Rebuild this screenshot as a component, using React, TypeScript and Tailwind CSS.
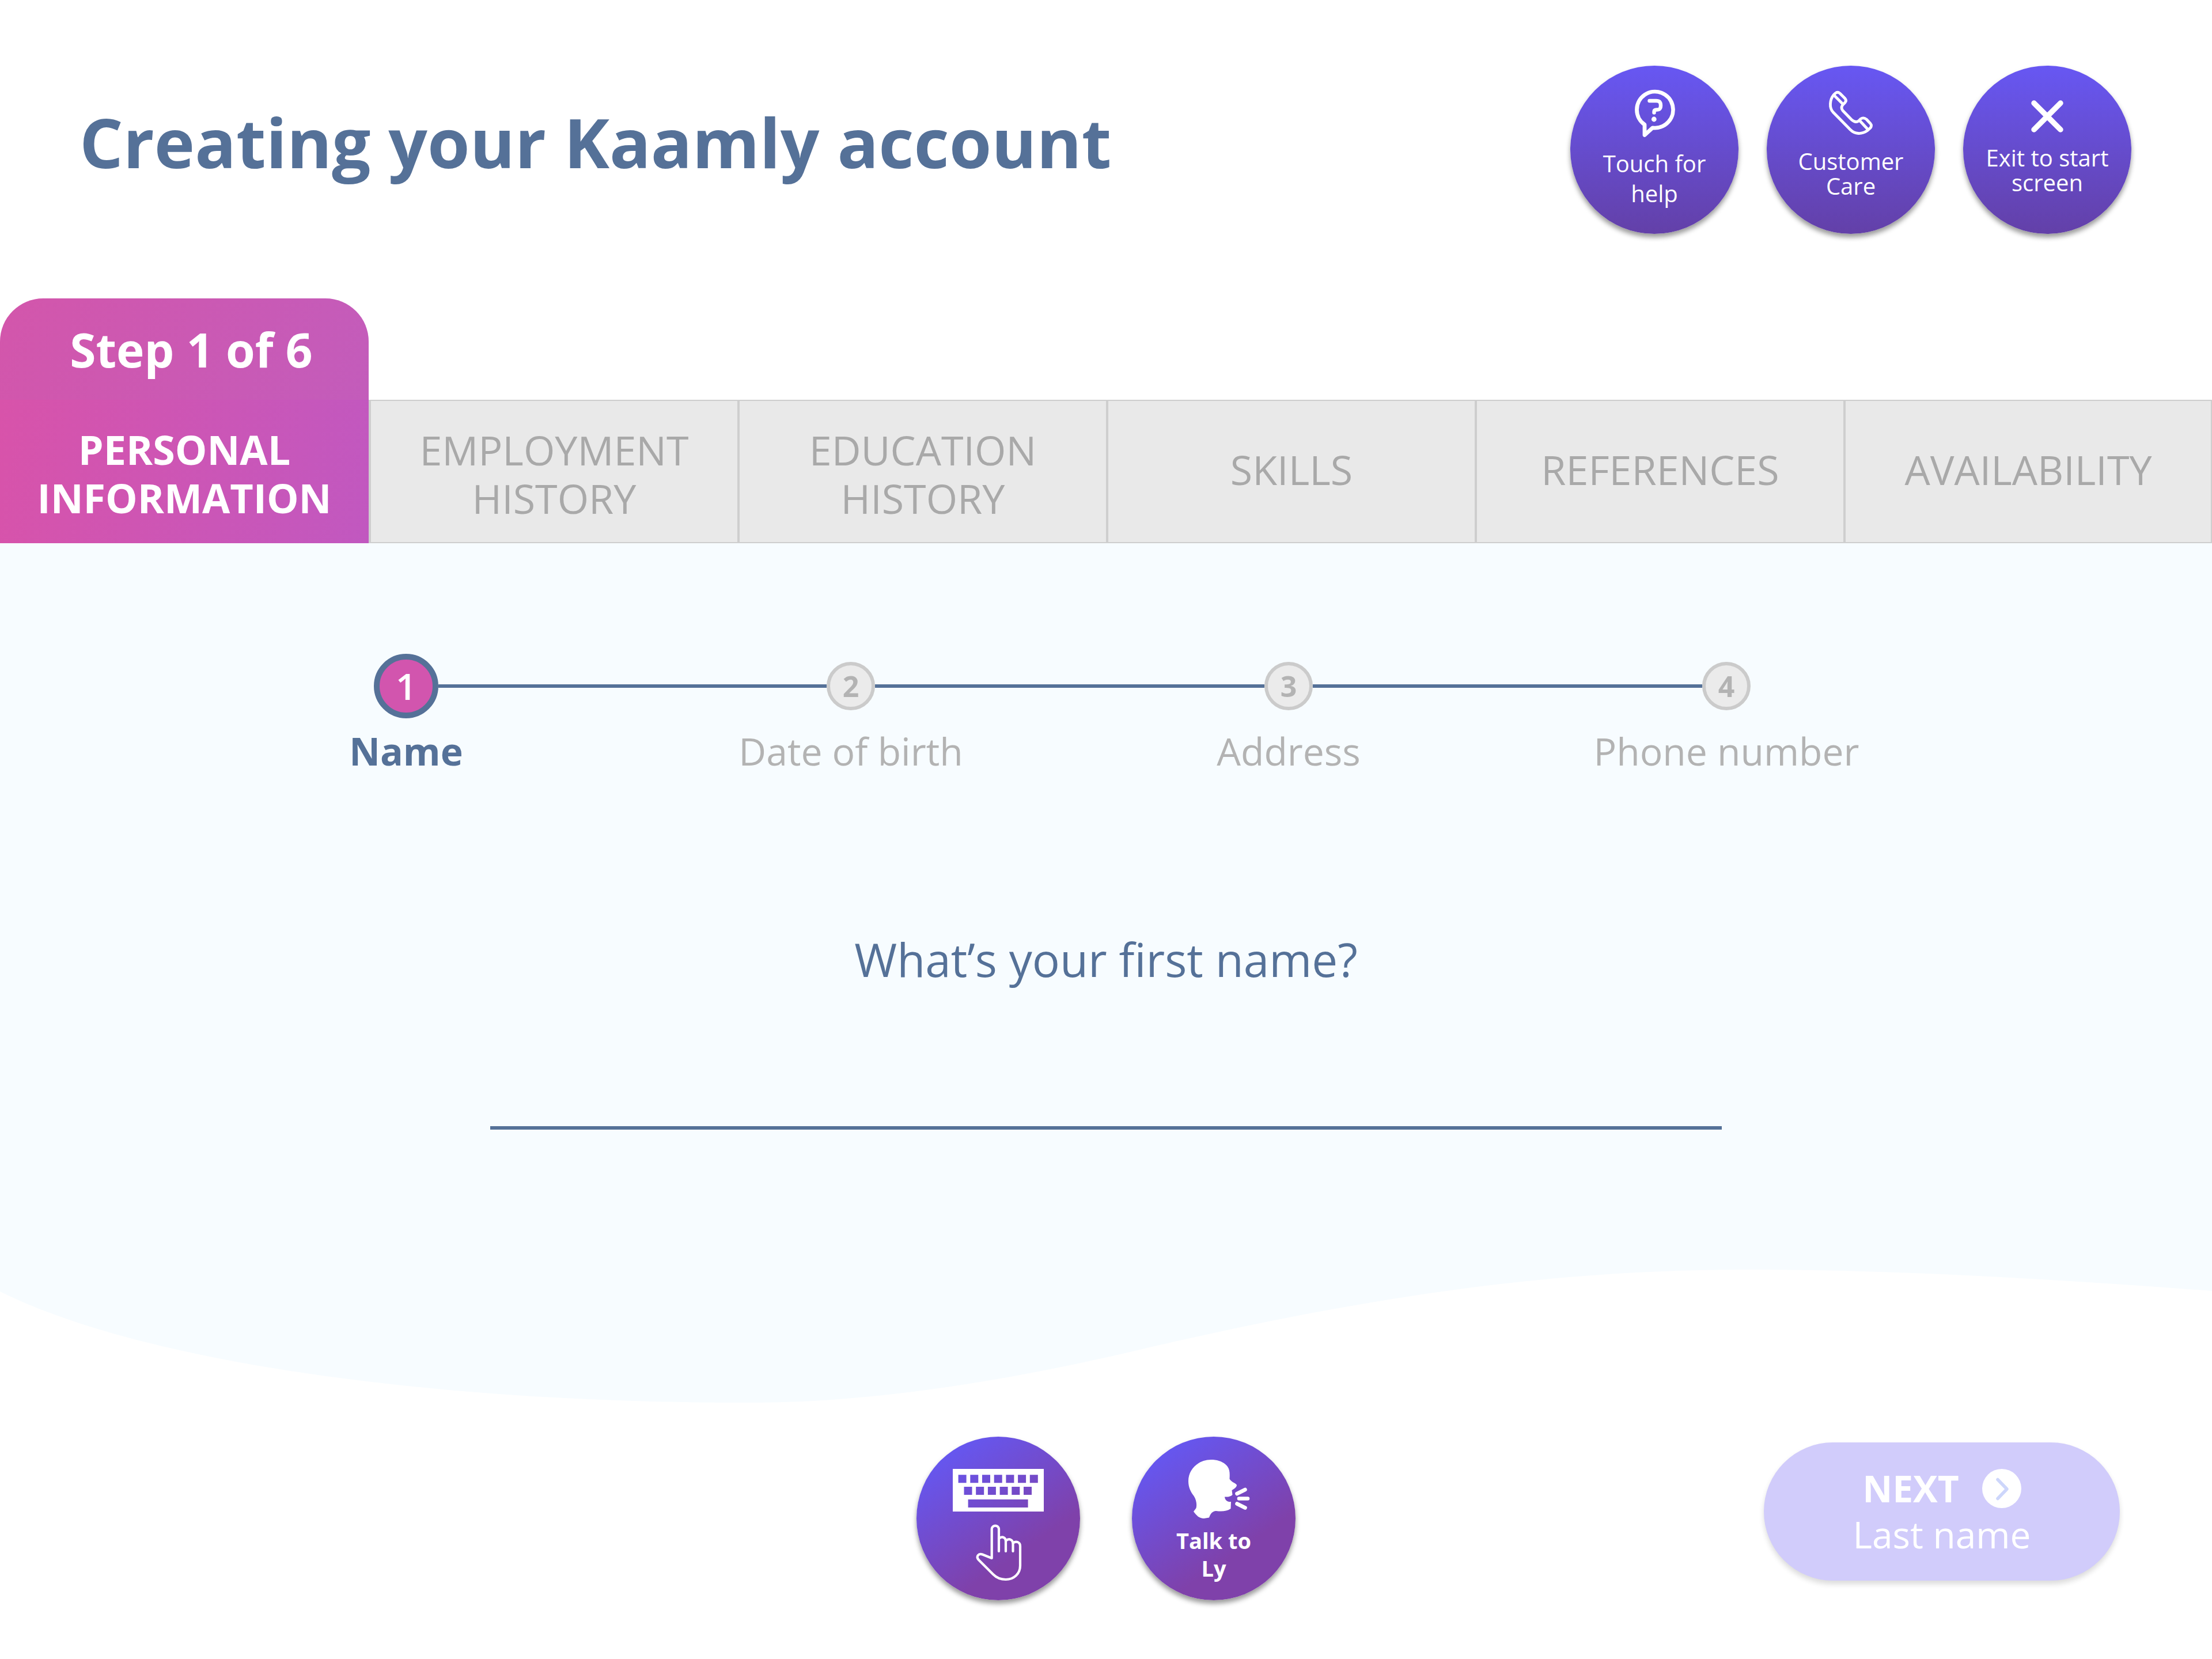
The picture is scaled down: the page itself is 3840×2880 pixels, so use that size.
import type { ReactNode } from 'react';

const tabs = [
  { lines: ['EMPLOYMENT', 'HISTORY'] },
  { lines: ['EDUCATION', 'HISTORY'] },
  { lines: ['SKILLS'] },
  { lines: ['REFERENCES'] },
  { lines: ['AVAILABILITY'] },
];

const steps = ['Name', 'Date of birth', 'Address', 'Phone number'];

// key cut-outs of the keyboard glyph
const key = (x: number, y: number, w = 14) => `M${x} ${y}h${w}v14h${-w}z`;
const keyboardPath = [
  'M0 0h158v74h-158z',
  ...Array.from({ length: 7 }, (_, i) => key(9.6 + i * 20.7, 10.3)),
  ...Array.from({ length: 6 }, (_, i) => key(19.5 + i * 20.7, 31)),
  key(26.6, 53, 104),
].join('');

const HelpIcon = () => (
  <svg viewBox="0 0 100 100" className="size-[100px]" fill="none" stroke="currentColor" strokeWidth="6.8" strokeLinecap="round" strokeLinejoin="round">
    <path d="M33 70.4A31.5 31.5 0 1 1 47 75.8L33 88.5Z" />
    <path d="M41.5 29H53C59 29 61 32 61 37C61 43 59 44.5 54 44.5Q49.5 44.5 49.5 48V49.5" strokeWidth="6.4" />
    <circle cx="49.3" cy="61" r="4.4" fill="currentColor" stroke="none" />
  </svg>
);

const PhoneIcon = () => (
  <svg viewBox="0 0 100 100" className="size-[100px]" fill="none" stroke="currentColor" strokeWidth="4.8" strokeLinecap="round" strokeLinejoin="round">
    <path d="M20 19L23 16Q27 12.5 31 16L40 25Q43 28.5 40 32L36 36Q32 41 36 46L51 61.5Q58 68 63.5 64L67 60.5Q72 57 77 61L84 68.5Q87 72 84 76L79 80.5Q71 86 63 85.5Q55 85 49 79L19 48.5Q14 43 14.5 34Q15 25 20 19Z" />
    <path d="M20.5 19L35.5 34M65 63L79.5 78.5" />
  </svg>
);

const CloseIcon = () => (
  <svg viewBox="0 0 100 100" className="size-[100px]" fill="none" stroke="currentColor" strokeWidth="9.5" strokeLinecap="round">
    <path d="M27 33L73 79M73 33L27 79" />
  </svg>
);

const KeyboardIcon = () => (
  <svg viewBox="0 0 158 74" className="h-[74px] w-[158px]">
    <path d={keyboardPath} fill="currentColor" fillRule="evenodd" />
  </svg>
);

const HandIcon = () => (
  <svg viewBox="-6 0 110 120" className="h-[120px] w-[110px]" fill="none" stroke="currentColor" strokeWidth="4.2" strokeLinecap="round" strokeLinejoin="round">
    <path d="M50 57V18A6.2 6.2 0 0 0 37.7 18V69L21.5 62.5C15 60 9.5 66 15 72L40 97C46 103 53 106 62 106C76 106 87 96 87 82V48C87 41 80 38.5 74.5 42.5" />
    <path d="M50 35C56 30 62 33 62 40V57M62 39C68 33.5 74.5 37 74.5 44V57" />
  </svg>
);

const TalkIcon = () => (
  <svg viewBox="-7 0 130 130" className="size-[130px]" stroke="currentColor" strokeWidth="6.6" strokeLinecap="round">
    <path
      d="M53.5 14C32 14 14 30 14 51C14 62 18 70 23.5 77C28 84 29 92 27.5 98L23 104C28 111 33 116 41 116L50 114.5C52 108 56 103 62 103C72 104 80 104 87.5 99L88 87C82 88 77.5 84 77 78.5C83 79 87 78 90.5 75L89.5 67C93 65 98 62 98 58C97 55 90 54 85.5 47.5C86 38 86 32 82 26C76 18 65 14 53.5 14Z"
      fill="currentColor"
      stroke="none"
    />
    <path d="M98.5 73L112.5 66M102 81.5H117M98.5 90.5L112.5 97.5" />
  </svg>
);

interface HeaderButtonProps {
  icon: ReactNode;
  lines: string[];
  labelClass: string;
}

const HeaderButton = ({ icon, lines, labelClass }: HeaderButtonProps) => (
  <button
    type="button"
    className="flex size-[292px] shrink-0 flex-col items-center rounded-full bg-linear-to-b from-[#6757f3] to-[#6340a8] pt-8 text-[40px] text-white shadow-[0_6px_8px_rgba(0,0,0,0.4)]"
  >
    {icon}
    <span className={labelClass}>
      {lines.map((line) => (
        <span key={line} className="block whitespace-nowrap">{line}</span>
      ))}
    </span>
  </button>
);

const Header = () => (
  <header className="flex items-center justify-between pt-[114px] pr-[140px] pb-28 pl-[138px]">
    <h1 className="mb-7 text-[119px] leading-[160px] font-bold text-[#557198]">Creating your Kaamly account</h1>
    <div className="flex gap-[49px]">
      <HeaderButton icon={<HelpIcon />} lines={['Touch for', 'help']} labelClass="mt-3 leading-[52px]" />
      <HeaderButton icon={<PhoneIcon />} lines={['Customer', 'Care']} labelClass="mt-3 leading-[43px]" />
      <HeaderButton icon={<CloseIcon />} lines={['Exit to start', 'screen']} labelClass="mt-1.5 leading-[43px]" />
    </div>
  </header>
);

const TabBar = () => (
  <nav className="grid grid-cols-6 items-end text-center text-[70px] leading-[84px]">
    <a href="#personal" aria-current="page" className="text-white">
      <span className="flex h-44 items-center justify-center rounded-t-[75px] bg-linear-[110deg] from-[#d356ab] to-[#c35cbb] pl-6 text-[82px] font-bold">
        Step 1 of 6
      </span>
      <span className="flex h-[249px] flex-col justify-center bg-linear-[100deg] from-[#d853aa] to-[#c158c0] pt-1.5 font-bold">
        <span>PERSONAL</span>
        <span>INFORMATION</span>
      </span>
    </a>
    {tabs.map((tab) => (
      <a
        key={tab.lines.join(' ')}
        href="#"
        className={`flex h-[249px] flex-col justify-center border-y-2 border-l-4 border-[#cecece] bg-[#e9e9e9] text-[#a9a9a9] last:border-r-2 ${
          tab.lines.length > 1 ? 'pt-2' : 'pb-2'
        }`}
      >
        {tab.lines.map((line) => (
          <span key={line}>{line}</span>
        ))}
      </a>
    ))}
  </nav>
);

const Stepper = () => (
  <ol className="grid grid-cols-[784fr_760fr_760fr_760fr] pr-[463px] pl-[313px]">
    {steps.map((step, i) => {
      const active = i === 0;
      const last = i === steps.length - 1;
      return (
        <li key={step} className="flex flex-col items-center gap-4">
          <div className="flex h-28 w-full items-center">
            <span className={active ? 'h-1.5 flex-1' : 'h-1.5 flex-1 bg-[#557198]'} />
            <span
              className={
                active
                  ? 'flex size-28 items-center justify-center rounded-full border-10 border-[#557198] bg-[#d255ae] text-[64px] font-semibold text-white'
                  : 'flex size-[84px] items-center justify-center rounded-full border-6 border-[#cbcbcb] bg-[#ebebeb] text-[50px] font-bold text-[#b3b3b3]'
              }
            >
              {i + 1}
            </span>
            <span className={last ? 'h-1.5 flex-1' : 'h-1.5 flex-1 bg-[#557198]'} />
          </div>
          <span
            className={
              active
                ? 'text-[66px] leading-[80px] font-bold text-[#557198]'
                : 'text-[66px] leading-[80px] text-[#b3b3b3]'
            }
          >
            {step}
          </span>
        </li>
      );
    })}
  </ol>
);

const App = () => (
  <div className="min-h-screen bg-white font-['Open_Sans',sans-serif]">
    <Header />
    <TabBar />

    <main>
      <div className="bg-[#f7fcff] pt-48 pb-[243px]">
        <Stepper />
        <div className="mt-[262px] flex flex-col items-center">
          <label htmlFor="first-name" className="text-[80px] leading-[120px] text-[#557198]">
            What’s your first name?
          </label>
          <input
            id="first-name"
            type="text"
            className="mt-[76px] h-40 w-full max-w-[2138px] border-b-6 border-[#557198] bg-transparent text-center text-[80px] text-[#557198] outline-none"
          />
        </div>
      </div>
      <svg viewBox="0 2203 3840 232" preserveAspectRatio="none" className="block h-[232px] w-full" aria-hidden="true">
        <path
          d="M0 2202V2241C250 2365 750 2434 1300 2434C1520 2434 1760 2395 2008 2335C2330 2262 2650 2203 3037 2203C3300 2203 3600 2222 3840 2240V2202Z"
          fill="#f7fcff"
        />
      </svg>
    </main>

    <footer className="grid grid-cols-[1fr_auto_1fr] items-start px-40 pt-[58px] pb-[102px]">
      <div className="col-start-2 flex gap-[90px]">
        <button
          type="button"
          aria-label="Keyboard"
          className="flex size-[284px] flex-col items-center gap-3 rounded-full bg-linear-[145deg] from-[#6656ee] from-15% to-[#7f41aa] to-68% pt-14 text-white shadow-[0_6px_8px_rgba(0,0,0,0.4)]"
        >
          <KeyboardIcon />
          <HandIcon />
        </button>
        <button
          type="button"
          className="flex size-[284px] flex-col items-center rounded-full bg-linear-[145deg] from-[#6656ee] from-15% to-[#7f41aa] to-68% pt-[26px] text-[38px] leading-[48px] font-bold text-white shadow-[0_6px_8px_rgba(0,0,0,0.4)]"
        >
          <TalkIcon />
          <span>Talk to</span>
          <span>Ly</span>
        </button>
      </div>
      <button
        type="button"
        className="mt-2.5 flex h-60 w-[618px] flex-col items-center justify-center justify-self-end rounded-full bg-[#d1ccfb] text-[64px] leading-[80px] text-white shadow-[0_6px_10px_rgba(0,0,0,0.14)]"
      >
        <span className="flex items-center gap-10 font-bold">
          NEXT
          <svg viewBox="0 0 68 68" className="size-[68px]" fill="none">
            <circle cx="34" cy="34" r="34" fill="#fff" />
            <path d="M27 18.5L43 35L27 51.5" stroke="#cdd6fb" strokeWidth="5.5" strokeLinecap="round" strokeLinejoin="round" />
          </svg>
        </span>
        <span>Last name</span>
      </button>
    </footer>
  </div>
);

export default App;
